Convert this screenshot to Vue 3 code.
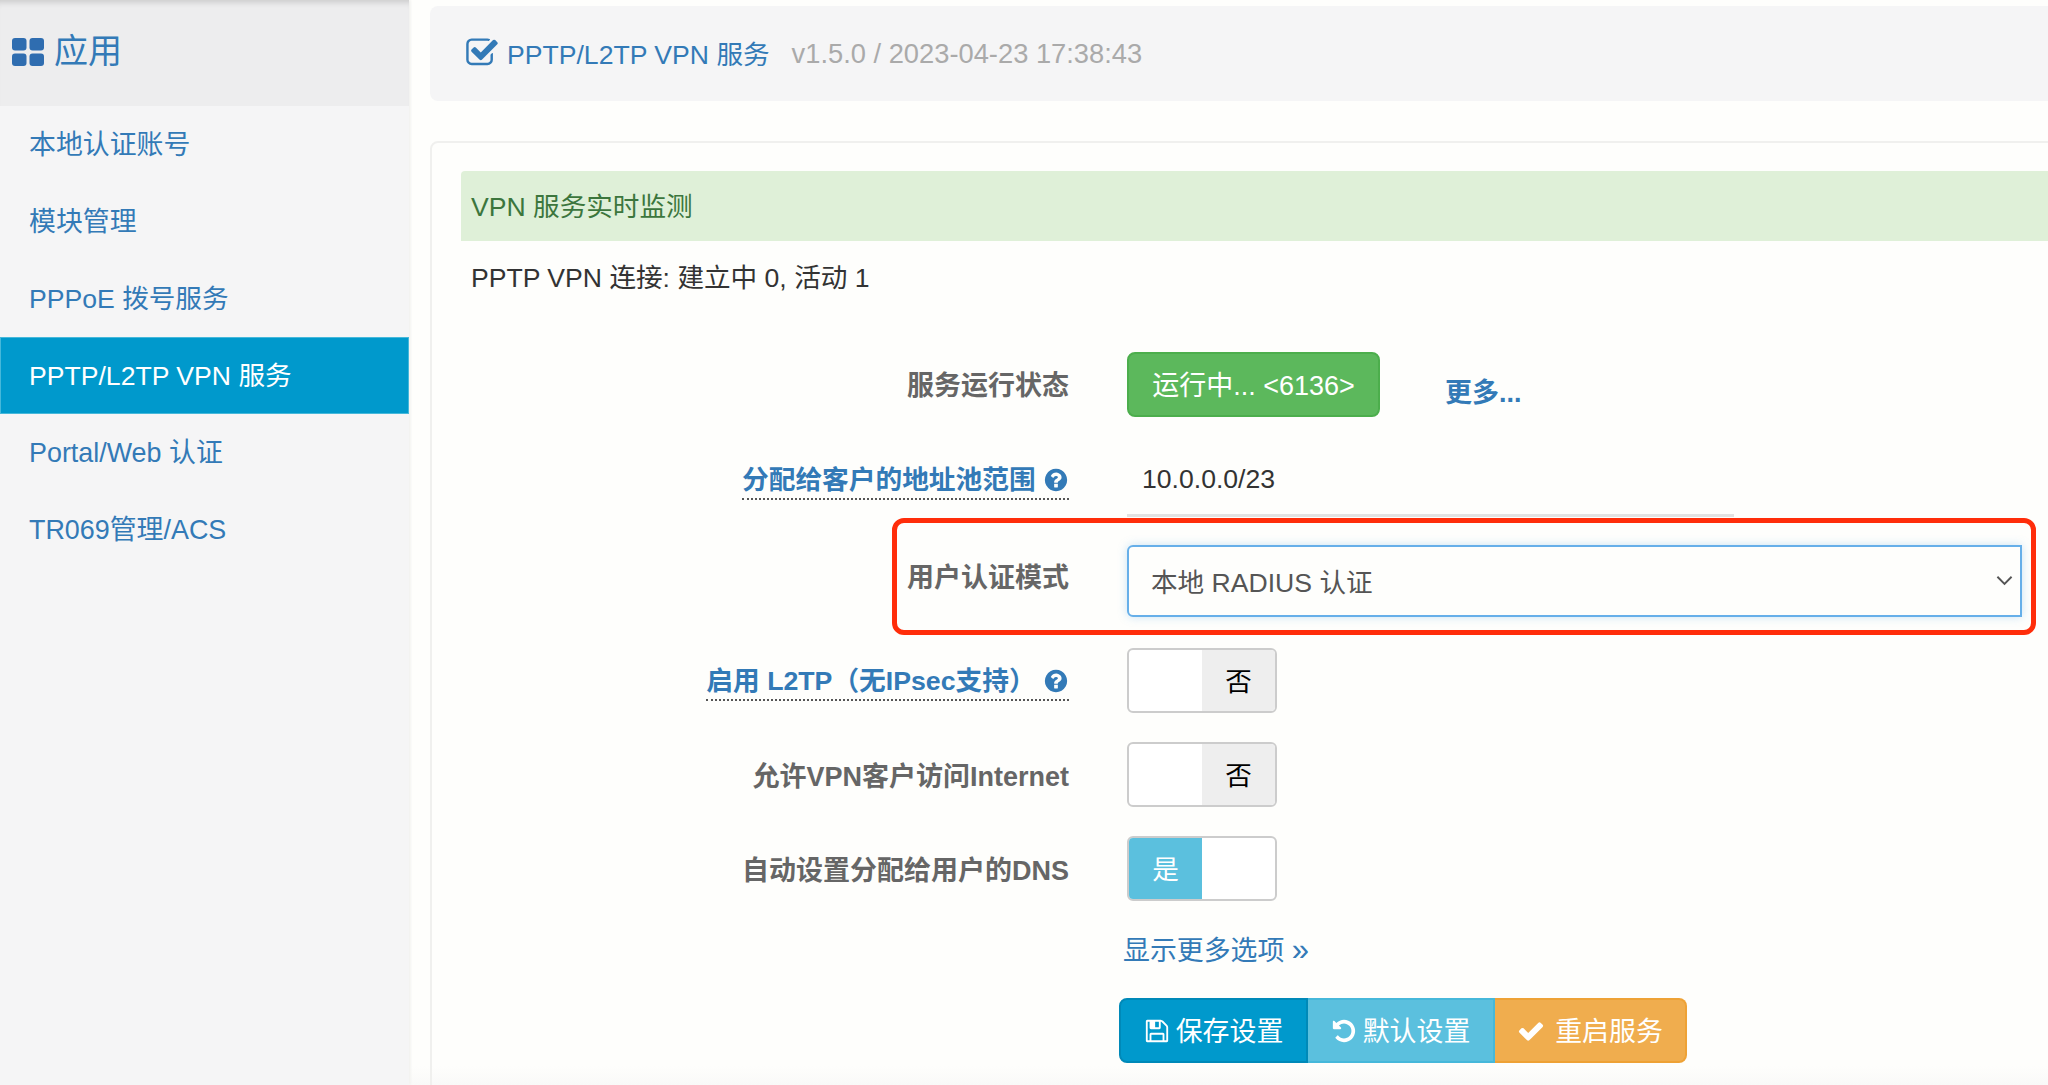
<script setup>
const menu = [
  { text: '本地认证账号' },
  { text: '模块管理' },
  { text: 'PPPoE 拨号服务', tight: true },
  { text: 'PPTP/L2TP VPN 服务', active: true, tight: true },
  { text: 'Portal/Web 认证' },
  { text: 'TR069管理/ACS' },
]
const switches = [
  { label: 'L2TP', help: true, text: '启用 L2TP（无IPsec支持）', on: false },
  { label: 'inet', text: '允许VPN客户访问Internet', on: false },
  { label: 'dns', text: '自动设置分配给用户的DNS', on: true },
]
const paths = {
  check: 'M1671 566q0 40-28 68l-724 724-136 136q-28 28-68 28t-68-28l-136-136-362-362q-28-28-28-68t28-68l136-136q28-28 68-28t68 28l294 295 656-657q28-28 68-28t68 28l136 136q28 28 28 68z',
  save: 'M512 1536h768v-384h-768v384zm896 0h128v-896q0-14-10-38.5t-20-34.5l-281-281q-10-10-34-20t-39-10v416q0 40-28 68t-68 28h-576q-40 0-68-28t-28-68v-416h-128v1280h128v-416q0-40 28-68t68-28h832q40 0 68 28t28 68v416zm-384-928v-320q0-13-9.5-22.5t-22.5-9.5h-192q-13 0-22.5 9.5t-9.5 22.5v320q0 13 9.5 22.5t22.5 9.5h192q13 0 22.5-9.5t9.5-22.5zm640 32v928q0 40-28 68t-68 28h-1344q-40 0-68-28t-28-68v-1344q0-40 28-68t68-28h928q40 0 88 20t76 48l280 280q28 28 48 76t20 88z',
  undo: 'M1664 896q0 156-61 298t-164 245-245 164-298 61q-172 0-327-72.5t-264-204.5q-7-10-6.5-22.5t8.5-20.5l137-138q10-9 25-9 16 2 23 12 73 95 179 147t225 52q104 0 198.5-40.5t163.5-109.5 109.5-163.5 40.5-198.5-40.5-198.5-109.5-163.5-163.5-109.5-198.5-40.5q-98 0-188 35.5t-160 101.5l137 138q31 30 14 69-17 40-59 40h-448q-26 0-45-19t-19-45v-448q0-42 40-59 39-17 69 14l130 129q107-101 244.5-156.5t284.5-55.5q156 0 298 61t245 164 164 245 61 298z',
  help: 'M1024 1376v-192q0-14-9-23t-23-9h-192q-14 0-23 9t-9 23v192q0 14 9 23t23 9h192q14 0 23-9t9-23zm256-672q0-88-55.5-163t-138.5-116-170-41q-243 0-371 213-15 24 8 42l132 100q7 6 19 6 16 0 25-12 53-68 86-92 34-24 86-24 48 0 85.5 26t37.5 59q0 38-20 61t-68 45q-63 28-115.5 86.5t-52.5 125.5v36q0 14 9 23t23 9h192q14 0 23-9t9-23q0-19 21.5-49.5t54.5-49.5q32-18 49-28.5t46-35 44.5-48 28-60.5 12.5-81zm384 192q0 209-103 385.5t-279.5 279.5-385.5 103-385.5-103-279.5-279.5-103-385.5 103-385.5 279.5-279.5 385.5-103 385.5 103 279.5 279.5 103 385.5z',
  square: 'M1472 930v318q0 119-84.5 203.5t-203.5 84.5h-832q-119 0-203.5-84.5t-84.5-203.5v-832q0-119 84.5-203.5t203.5-84.5h832q63 0 117 25 15 7 18 23 3 17-9 29l-49 49q-10 10-23 10-3 0-9-2-23-6-45-6h-832q-66 0-113 47t-47 113v832q0 66 47 113t113 47h832q66 0 113-47t47-113v-254q0-13 9-22l64-64q10-10 23-10 6 0 12 3 20 8 20 29zm231-489l-814 814q-24 24-57 24t-57-24l-430-430q-24-24-24-57t24-57l110-110q24-24 57-24t57 24l263 263 647-647q24-24 57-24t57 24l110 110q24 24 24 57t-24 57z',
}
</script>

<template>
  <div class="page">
    <aside class="sidebar">
      <div class="side-head">
        <svg class="grid-icon" viewBox="0 0 32 28" aria-hidden="true">
          <rect x="0" y="0" width="14.5" height="12.5" rx="3" />
          <rect x="17.5" y="0" width="14.5" height="12.5" rx="3" />
          <rect x="0" y="15.5" width="14.5" height="12.5" rx="3" />
          <rect x="17.5" y="15.5" width="14.5" height="12.5" rx="3" />
        </svg>
        <span class="head-text">应用</span>
      </div>
      <nav class="menu">
        <a v-for="item in menu" :key="item.text" class="menu-item" :class="{ active: item.active, tight: item.tight }">{{ item.text }}</a>
      </nav>
    </aside>

    <main class="main">
      <header class="title-panel">
        <svg class="title-icon" viewBox="0 0 1792 1792" aria-hidden="true"><path :d="paths.square" /></svg>
        <span class="title-text">PPTP/L2TP VPN 服务</span>
        <span class="version">v1.5.0 / 2023-04-23 17:38:43</span>
      </header>

      <section class="panel">
        <div class="alert">VPN 服务实时监测</div>
        <p class="monitor">PPTP VPN 连接: 建立中 0, 活动 1</p>

        <div class="row row-status">
          <label class="label">服务运行状态</label>
          <div class="control">
            <button class="status-btn">运行中... &lt;6136&gt;</button>
            <a class="more">更多...</a>
          </div>
        </div>

        <div class="row row-pool">
          <label class="label">
            <span class="hint">分配给客户的地址池范围
              <svg class="help" viewBox="0 0 1792 1792" aria-hidden="true"><path :d="paths.help" /></svg>
            </span>
          </label>
          <div class="control"><div class="input">10.0.0.0/23</div></div>
        </div>

        <div class="row row-select">
          <label class="label">用户认证模式</label>
          <div class="control">
            <div class="select">
              <span>本地 RADIUS 认证</span>
              <svg class="chevron" viewBox="0 0 18 11" aria-hidden="true"><path d="M1.5 1.5 9 9l7.5-7.5" /></svg>
            </div>
          </div>
          <div class="annotation"></div>
        </div>

        <div v-for="s in switches" :key="s.label" class="row row-switch">
          <label class="label">
            <span v-if="s.help" class="hint">{{ s.text }}
              <svg class="help" viewBox="0 0 1792 1792" aria-hidden="true"><path :d="paths.help" /></svg>
            </span>
            <template v-else>{{ s.text }}</template>
          </label>
          <div class="control">
            <div class="switch">
              <span class="half" :class="{ yes: s.on }">{{ s.on ? '是' : '' }}</span>
              <span class="half" :class="{ no: !s.on }">{{ s.on ? '' : '否' }}</span>
            </div>
          </div>
        </div>

        <a class="show-more">显示更多选项 <span class="raquo">»</span></a>

        <div class="btn-group">
          <button class="btn btn-save">
            <svg class="btn-icon" viewBox="0 0 1792 1792" aria-hidden="true"><path :d="paths.save" /></svg>保存设置
          </button>
          <button class="btn btn-default">
            <svg class="btn-icon" viewBox="0 0 1792 1792" aria-hidden="true"><path :d="paths.undo" /></svg>默认设置
          </button>
          <button class="btn btn-restart">
            <svg class="btn-icon" viewBox="0 0 1792 1792" aria-hidden="true"><path :d="paths.check" /></svg>重启服务
          </button>
        </div>
      </section>
    </main>
  </div>
</template>

<style>
html, body { margin: 0; overflow: hidden; background: #fefefc; }
</style>

<style scoped>
.page {
  display: flex;
  width: 2048px;
  height: 1085px;
  overflow: hidden;
  background: linear-gradient(#fefefc 1066px, #f9f9f8 1085px);
  font-family: "Liberation Sans", "Noto Sans CJK SC", sans-serif;
  font-size: 26.6px;
  color: #333;
}
.sidebar {
  flex: 0 0 409px;
  background: #f5f5f6;
  box-shadow: 2px 0 2px #f3f3f1;
}
.side-head {
  display: flex;
  align-items: center;
  gap: 10px;
  height: 106px;
  padding: 0 0 3px 12px;
  box-sizing: border-box;
  background: #ededee;
  box-shadow: inset 0 7px 6px -5px rgba(0, 0, 0, 0.16);
  color: #337ab7;
  font-size: 34px;
}
.head-text { margin-top: -6px; }
.grid-icon { width: 32px; height: 28px; fill: #2f6db0; }
.menu { display: flex; flex-direction: column; }
.menu-item {
  display: flex;
  align-items: center;
  height: 77px;
  padding: 0 0 5px 29px;
  box-sizing: border-box;
  font-size: 26.9px;
  color: #337ab7;
}
.menu-item.tight { font-size: 26.6px; }
.menu-item.active {
  background: #0099cc;
  box-shadow: inset 0 0 0 1px #46b8da;
  color: #fff;
}
.main {
  flex: 1;
  min-width: 0;
  padding: 6px 0 0 21px;
  overflow: hidden;
}
.title-panel {
  display: flex;
  align-items: center;
  height: 95px;
  width: 1700px;
  padding: 0 0 2px 35px;
  box-sizing: border-box;
  border-radius: 8px;
  background: #f5f5f6;
}
.title-icon { width: 34px; height: 34px; fill: #337ab7; margin-right: 8px; }
.title-text { color: #337ab7; }
.version { margin: 2px 0 0 22px; font-size: 27.3px; color: #aaa; }
.panel {
  width: 1700px;
  margin-top: 40px;
  height: 960px;
  padding: 28px 0 0 29px;
  box-sizing: border-box;
  border: 2px solid #f0f0ee;
  border-radius: 8px;
  background: transparent;
}
.alert {
  display: flex;
  align-items: center;
  height: 70px;
  padding: 0 0 4px 10px;
  box-sizing: border-box;
  background: #dff0d8;
  color: #3c763d;
  border-radius: 4px 0 0 0;
}
.monitor {
  margin: 18px 0 55px 10px;
  line-height: 38px;
}
.row {
  position: relative;
  display: flex;
  margin-bottom: 29px;
}
.label {
  flex: 0 0 608px;
  text-align: right;
  font-size: 27px;
  font-weight: 700;
  color: #666;
  align-self: center;
}
.control { margin-left: 58px; }
.row-status { height: 65px; margin-bottom: 28px; }
.row-status .label { padding-bottom: 3px; }
.row-status .control { display: flex; align-items: flex-start; }
.status-btn {
  width: 253px;
  height: 65px;
  padding: 0 0 2px;
  border: 2px solid #4cae4c;
  border-radius: 8px;
  background: #5cb85c;
  color: #fff;
  font: inherit;
  font-size: 27px;
}
.more {
  margin: 19px 0 0 65px;
  font-size: 27px;
  color: #337ab7;
  font-weight: 700;
}
.row-pool { height: 72px; margin-bottom: 28px; }
.input {
  width: 607px;
  height: 72px;
  padding-left: 15px;
  box-sizing: border-box;
  display: flex;
  align-items: center;
  border-bottom: 3px solid #e2e2e2;
  color: #333;
}
.hint {
  display: inline-block;
  font-size: 26.7px;
  color: #337ab7;
  line-height: 36px;
  border-bottom: 2px dotted #555;
}
.row-switch .hint { margin-top: 3px; }
.help {
  width: 26px;
  height: 26px;
  fill: #337ab7;
  vertical-align: -4px;
}
.row-select { height: 72px; margin-bottom: 31px; }
.row-select .label { align-self: flex-start; margin-top: 11px; }
.select {
  display: flex;
  align-items: center;
  justify-content: space-between;
  width: 895px;
  height: 72px;
  padding: 0 7px 2px 22px;
  box-sizing: border-box;
  border: 2px solid #66afe9;
  border-radius: 6px 0 0 6px;
  background: #fefefc;
  box-shadow: 0 0 10px rgba(102, 175, 233, 0.35);
  color: #555;
}
.chevron {
  width: 17px;
  height: 11px;
  fill: none;
  stroke: #555;
  stroke-width: 2;
}
.annotation {
  position: absolute;
  left: 431px;
  top: -27px;
  width: 1144px;
  height: 117px;
  box-sizing: border-box;
  border: 5px solid #ff2d0a;
  border-radius: 12px;
  pointer-events: none;
}
.row-switch { height: 65px; }
.row-switch .label { padding-bottom: 1px; }
.switch {
  display: flex;
  width: 150px;
  height: 65px;
  box-sizing: border-box;
  border: 2px solid #ccc;
  border-radius: 6px;
  overflow: hidden;
  background: #fff;
}
.half {
  flex: 1;
  display: flex;
  align-items: center;
  justify-content: center;
  padding-bottom: 2px;
  color: #000;
}
.half.no { background: #eee; }
.half.yes { background: #5bc0de; color: #fff; }
.show-more {
  display: block;
  width: max-content;
  margin: 30px 0 0 662px;
  font-size: 26.9px;
  line-height: 40px;
  color: #337ab7;
}
.raquo { font-size: 31px; line-height: 30px; }
.btn-group {
  display: flex;
  margin: 27px 0 0 658px;
}
.btn {
  display: flex;
  align-items: center;
  justify-content: center;
  gap: 6px;
  height: 65px;
  padding: 0 0 3px;
  box-sizing: border-box;
  border: 2px solid;
  color: #fff;
  font: inherit;
  font-size: 26.9px;
}
.btn-icon { width: 26px; height: 26px; fill: #fff; margin-top: 3px; }
.btn-save { width: 189px; background: #0099cc; border-color: #0089b8; border-radius: 8px 0 0 8px; }
.btn-default { width: 187px; background: #5bc0de; border-color: #46b8da; border-left: 0; }
.btn-restart { width: 192px; gap: 10px; background: #f0ad4e; border-color: #eea236; border-left: 0; border-radius: 0 8px 8px 0; }
.btn-restart .btn-icon { width: 28px; height: 28px; }
</style>
